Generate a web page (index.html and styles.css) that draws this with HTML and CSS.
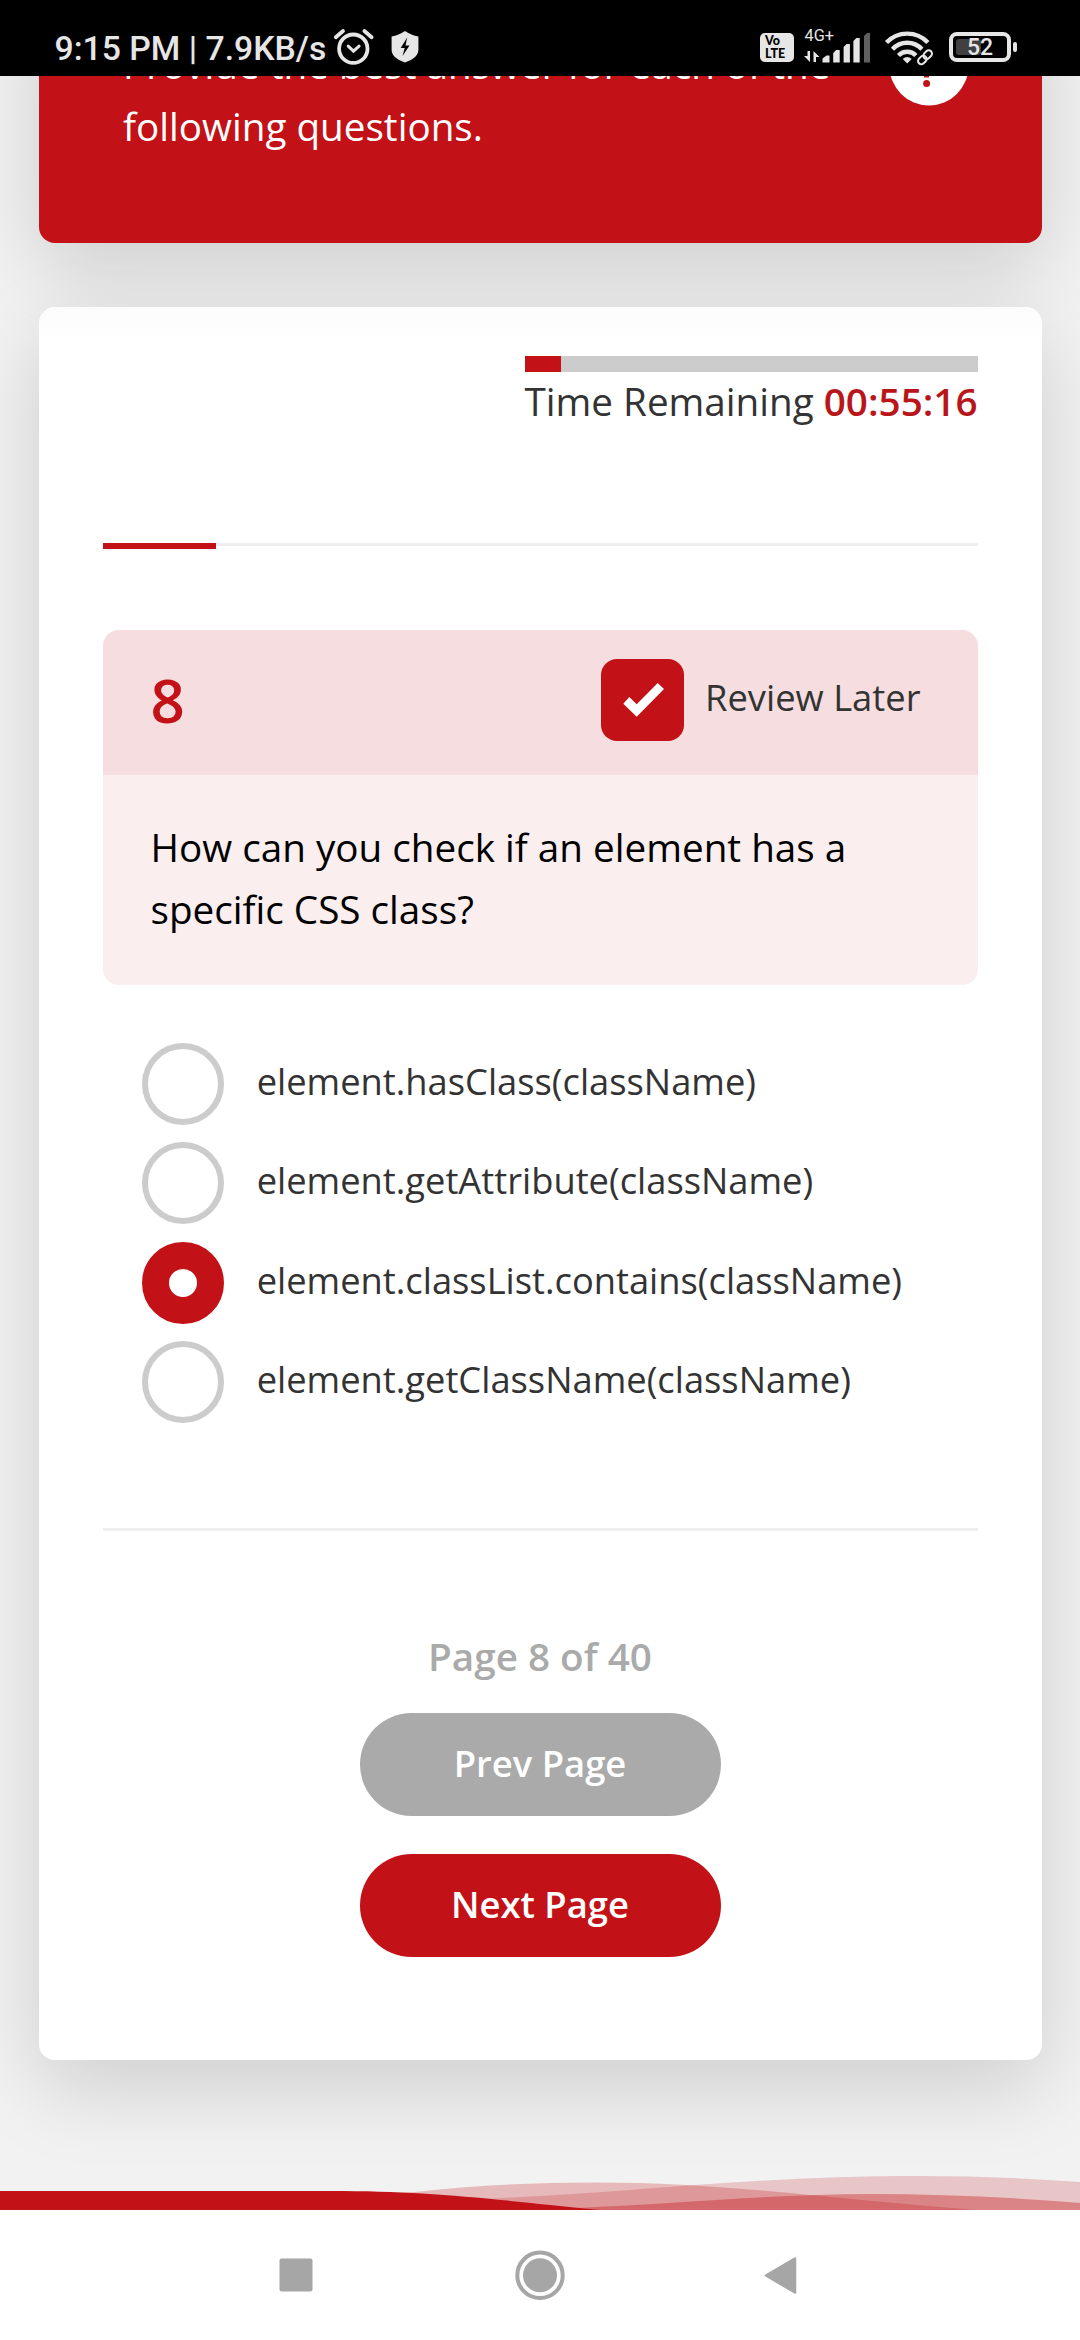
FILE: index.html
```
<!DOCTYPE html>
<html lang="en">
<head>
<meta charset="utf-8">
<title>Quiz</title>
<link rel="stylesheet" href="styles.css">
</head>
<body>
<header class="status">
  <span class="status-time">9:15 PM | 7.9KB/s</span>
  <svg class="status-left" width="90" height="40" viewBox="332 28 90 40" fill="none" stroke="#e6e6e6">
    <circle cx="353.3" cy="48.7" r="14.2" stroke-width="3.8"/>
    <path d="M335.8 37.2L343 31M364.4 31l7.2 6.2" stroke-width="3.8" stroke-linecap="round"/>
    <path d="M348.2 46.2l5.3 5 5.6-5" stroke-width="3" stroke-linecap="round"/>
    <path d="M405 31c4.500 3 8.500 4.800 13.400 5.500V50c0 6.500-7 10-13.400 12.500C398.500 60 391.600 56.500 391.600 50V36.500C396.500 35.800 400.500 34 405 31z" fill="#e6e6e6" stroke="none"/>
    <path d="M407.200 37.500l-6.500 10.500h4l-2.200 8 7-10.500h-4z" fill="#000" stroke="none"/>
  </svg>
  <div class="status-right">
    <span class="volte"><span>Vo</span><span>LTE</span></span>
    <span class="signal">
      <span class="net">4G+</span>
      <svg width="68" height="32" viewBox="803 32 68 32" fill="#e6e6e6">
        <path d="M807.500 51h2.500v11l-6-6h3.500zM813.500 62V51l6 6h-3.500v5z"/>
        <path d="M822.500 62.500v-4l4-3h3v7zM833.200 62.500V53l3-3h3.500v12.500zM843.600 62.500V47l3-3h3.300v18.500zM853.400 62.500V41l3-3h3.300v24.500z"/>
        <path d="M864 62.500V36l3-3h3v29.500z" fill="#606060"/>
      </svg>
    </span>
    <svg class="wifi" width="50" height="37" viewBox="883 29 50 37" fill="none" stroke="#e6e6e6">
      <path d="M886.500 42.500a28.500 28.500 0 0 1 41.400 0M892.500 49.200a20 20 0 0 1 29.400 0M898.500 55.500a12 12 0 0 1 17.400 0" stroke-width="4.400"/>
      <path d="M907.200 63.500l-4.500-4.500q4.500-4 9 0z" fill="#e6e6e6" stroke="none"/>
      <path d="M919 61.500l6-6" stroke="#000" stroke-width="6"/>
      <g transform="rotate(-45 925 57.300)" stroke-width="2"><rect x="916.500" y="54" width="9.500" height="6.600" rx="3.300"/><rect x="924" y="54" width="9.500" height="6.600" rx="3.300"/></g>
    </svg>
    <span class="battery"><span class="charge"></span><span class="pct">52</span></span><span class="nub"></span>
  </div>
</header>
<main class="page">
  <section class="card intro">
    <p>Provide the best answer for each of the<br>following questions.</p>
    <svg class="help" width="80" height="80" viewBox="0 0 80 80">
      <circle cx="40" cy="40" r="39.500" fill="#fff"/>
      <path d="M28 28c0-15 22-15 22-2 0 9-12.500 9-12.500 25.500" fill="none" stroke="#c31217" stroke-width="5"/>
      <circle cx="37.600" cy="57.500" r="3.500" fill="#c31217"/>
    </svg>
  </section>
  <section class="card quiz">
    <div class="timer">
      <div class="bar"><div class="bar-fill"></div></div>
      <div class="timer-text">Time Remaining <b>00:55:16</b></div>
    </div>
    <div class="progress"><div class="progress-fill"></div></div>
    <div class="question">
      <div class="question-head">
        <span class="number">8</span>
        <label class="review">
          <svg width="83" height="82" viewBox="0 0 83 82"><rect width="83" height="82" rx="16" fill="#c31217"/><path d="M22.300 44.700L28.300 38l7.400 7.300L56.700 24l6.300 6-27.300 27.700z" fill="#fff"/></svg>
          <span>Review Later</span>
        </label>
      </div>
      <p class="question-text">How can you check if an element has a<br>specific CSS class?</p>
    </div>
    <ul class="options">
      <li><i class="radio"></i><span>element.hasClass(className)</span></li>
      <li><i class="radio"></i><span>element.getAttribute(className)</span></li>
      <li><i class="radio checked"></i><span>element.classList.contains(className)</span></li>
      <li><i class="radio"></i><span>element.getClassName(className)</span></li>
    </ul>
    <hr class="rule">
    <footer class="pager">
      <div class="count">Page 8 of 40</div>
      <button class="btn prev">Prev Page</button>
      <button class="btn next">Next Page</button>
    </footer>
  </section>
  <svg class="waves" width="1080" height="40" viewBox="0 2170 1080 40" fill="#c31217">
    <path opacity=".2" d="M440 2210V2202Q500 2198 540 2196C640 2191 760 2176 920 2176Q1000 2176 1080 2182V2210z"/>
    <path opacity=".25" d="M380 2210V2194L415 2192Q500 2182.500 595 2182.400C720 2182.400 800 2196 975 2210z"/>
    <path opacity=".36" d="M540 2210L595 2207C700 2202 780 2194 872 2194Q970 2194 1080 2203V2210z"/>
    <path d="M0 2191H330C430 2191 480 2198 600 2210H0z"/>
  </svg>
</main>
<nav class="nav">
  <svg width="1080" height="130" viewBox="0 2210 1080 130" fill="#a6a6a6">
    <rect x="279.500" y="2258.500" width="33" height="33" rx="2"/>
    <circle cx="540" cy="2275.300" r="17"/>
    <circle cx="540" cy="2275.300" r="22.700" fill="none" stroke="#a6a6a6" stroke-width="4"/>
    <path d="M766 2275.500L795 2258.500V2292.500z" stroke="#a6a6a6" stroke-width="2.500" stroke-linejoin="round"/>
  </svg>
</nav>
</body>
</html>
```
FILE: styles.css
```
* { box-sizing: border-box; }
body {
  margin: 0;
  width: 1080px;
  height: 2340px;
  display: flex;
  flex-direction: column;
  overflow: hidden;
  background: #f2f2f2;
  font-family: "Open Sans", "Noto Sans", sans-serif;
  font-size: 38.65px;
  color: #333;
}
p, ul { margin: 0; padding: 0; }

.status {
  flex: none;
  height: 76px;
  padding: 28px 63px 0 54.500px;
  display: flex;
  align-items: flex-start;
  background: #000;
  color: #e6e6e6;
  font-family: Roboto, sans-serif;
}
.status-time { width: 277.500px; font-size: 33.740px; font-weight: 500; line-height: 42px; white-space: nowrap; }
.status-right { margin-left: auto; display: flex; align-items: flex-start; }
.volte {
  width: 34px;
  height: 29px;
  margin: 5px 9px 0 0;
  padding: 2px 0 0 5px;
  display: flex;
  flex-direction: column;
  border-radius: 5px;
  background: #e6e6e6;
  color: #000;
  font: 900 12.500px/12.800px Lato, sans-serif;
}
.signal { width: 68px; margin-right: 12px; display: grid; }
.signal > * { grid-area: 1 / 1; }
.signal svg { margin-top: 4px; }
.net { margin-left: 1.500px; font-size: 16.300px; line-height: 16px; }
.wifi { margin: 1px 16px 0 0; }
.battery {
  width: 62px;
  height: 30px;
  margin-top: 4px;
  padding: 3px;
  display: grid;
  border: 4px solid #e6e6e6;
  border-radius: 8px;
}
.battery > * { grid-area: 1 / 1; }
.charge { width: 25px; height: 16px; border-radius: 3px; background: #404040; }
.pct { text-align: center; font-size: 23px; font-weight: 500; line-height: 18px; }
.nub { width: 4px; height: 10px; margin: 14px 0 0 2px; border-radius: 2px; background: #e6e6e6; }

.page { flex: none; height: 2134px; display: flex; flex-direction: column; align-items: center; overflow: hidden; }
.card {
  flex: none;
  width: 1003px;
  border-radius: 16px;
  box-shadow: 0 27.500px 82.500px rgba(0, 0, 0, .15);
}
.intro {
  height: 267px;
  margin-top: -100px;
  padding: 58px 73px 0 84.500px;
  display: flex;
  justify-content: space-between;
  background: #c31217;
  color: #fff;
  line-height: 61.800px;
}
.help { margin-top: -8px; }
.quiz {
  height: 1753px;
  margin-top: 64px;
  padding: 49px 64px 0;
  display: flex;
  flex-direction: column;
  background: linear-gradient(#fcfcfc, #fff 35px);
}
.timer { align-self: flex-end; width: 453px; }
.bar { height: 16px; background: #ccc; }
.bar-fill { width: 36px; height: 16px; background: #c31217; }
.timer-text { line-height: 58px; white-space: nowrap; }
.timer-text b { font-weight: 600; color: #b9161b; }
.progress { height: 6px; margin-top: 113px; background: linear-gradient(#eee 3px, transparent 3px); }
.progress-fill { width: 113px; height: 6px; background: #c31217; }
.question { height: 355px; margin-top: 81px; border-radius: 16px; overflow: hidden; background: #faeeee; }
.question-head {
  height: 145px;
  padding: 0 57px 0 48px;
  display: flex;
  justify-content: space-between;
  background: #f6dee0;
}
.number { font-size: 60px; font-weight: 600; line-height: 141.500px; color: #c31217; }
.review { padding-top: 29px; display: flex; gap: 21px; font-size: 36.350px; line-height: 76px; }
.question-text { padding: 42px 48px 0; color: #000; line-height: 61.800px; }
.options {
  margin-top: 58px;
  padding-left: 39px;
  display: flex;
  flex-direction: column;
  gap: 17.400px;
  list-style: none;
  font-size: 36.300px;
}
.options li { height: 82px; display: flex; gap: 33.200px; line-height: 76px; }
.radio { width: 82px; height: 82px; border: 6px solid #ccc; border-radius: 50%; }
.radio.checked { border: 27px solid #c31217; background: #fff; }
.rule { width: 100%; height: 3px; margin: 104.800px 0 0; border: 0; background: #eee; }
.pager { padding-top: 95px; display: flex; flex-direction: column; align-items: center; }
.count { margin-bottom: 27px; font-weight: 600; line-height: 60px; color: #aaa; }
.btn {
  width: 361px;
  height: 103px;
  padding: 0 0 2px;
  border: 0;
  border-radius: 52px;
  font: 600 36.400px "Open Sans", sans-serif;
  color: #fff;
}
.prev { margin-bottom: 38px; background: #aaa; }
.next { background: #c31217; }
.waves { flex: none; margin-top: 110px; }
.nav { flex: none; height: 130px; background: #fff; }
.nav svg { display: block; }
```
